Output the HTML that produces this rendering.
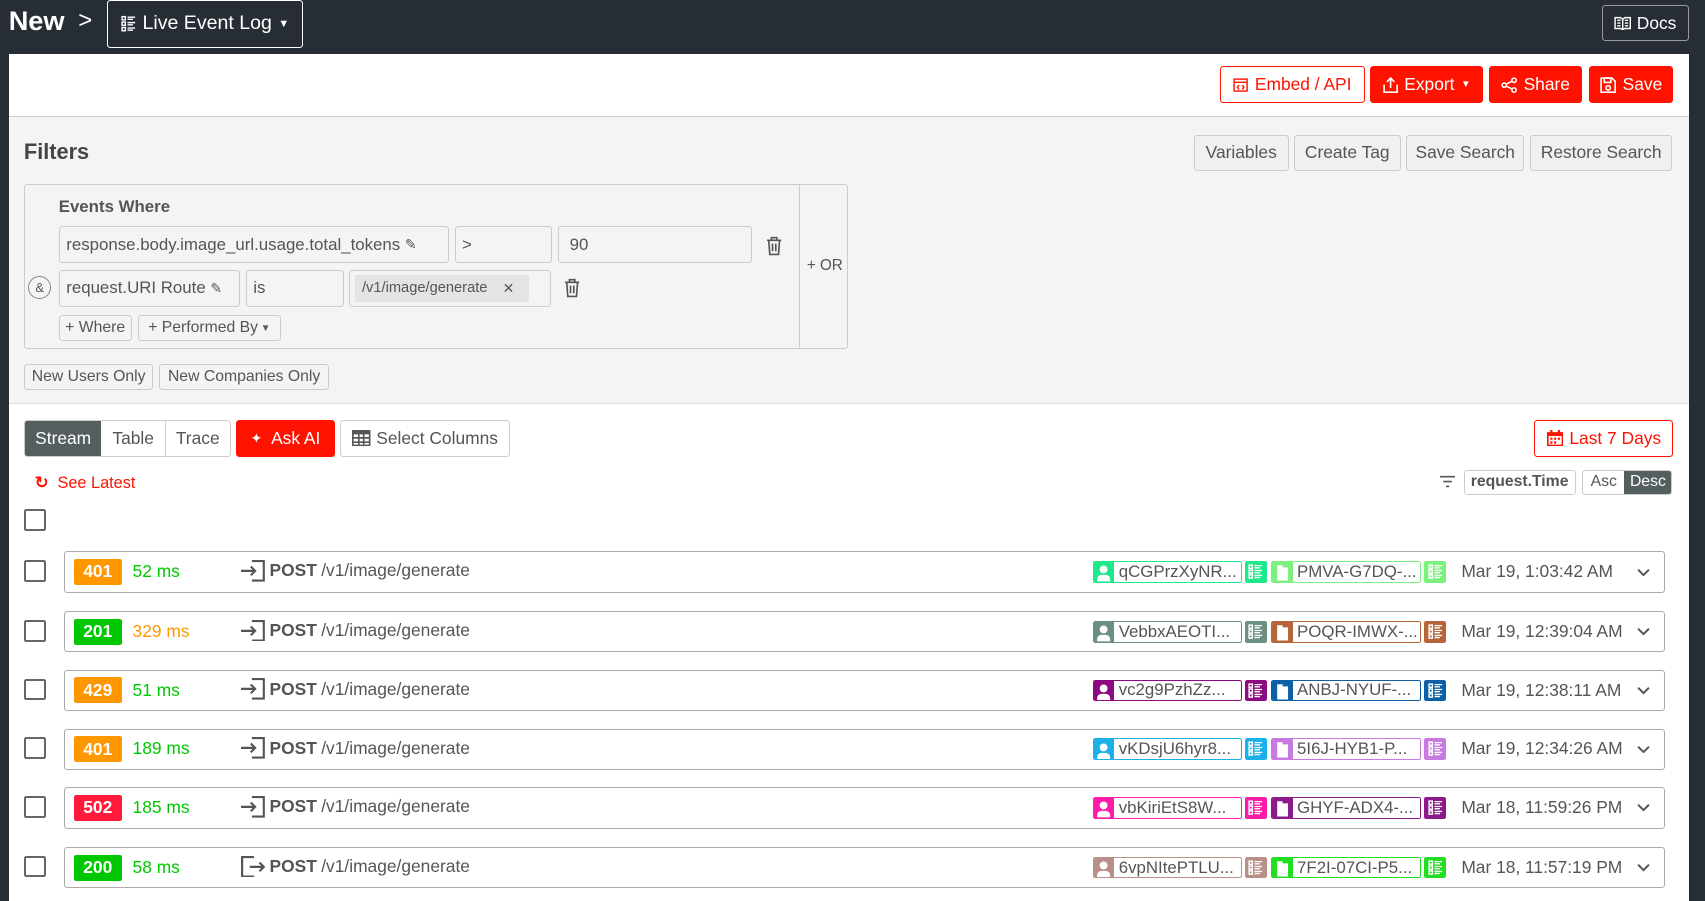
<!DOCTYPE html>
<html><head><meta charset="utf-8"><style>
html,body{margin:0;padding:0;background:#262d34;overflow:hidden}
body{width:1568px;height:829px;zoom:1.08737;position:relative;font-family:"Liberation Sans",Arial,sans-serif;color:#555;font-size:15.5px}
.a{position:absolute}
.btn{position:absolute;box-sizing:border-box;border:1px solid #ccc;border-radius:3px;display:flex;align-items:center;justify-content:center;white-space:nowrap}
.red{background:#ff1200;color:#fff;border-color:#ff1200}
.ored{color:#ff1200;border-color:#ff1200;background:#fff}
.gb{background:#f0f0f0;color:#555}
.inp{position:absolute;box-sizing:border-box;border:1px solid #ccc;border-radius:3px;background:#f4f4f4;display:flex;align-items:center;padding-left:6px;height:34px}
.row{position:absolute;left:59px;width:1472px;height:38px;box-sizing:border-box;border:1px solid #aaa;border-radius:3px;background:#fff}
.cb{position:absolute;left:22px;width:20px;height:20px;box-sizing:border-box;border:2px solid #666;border-radius:2px}
.st{position:absolute;left:8px;top:6px;width:44px;height:24px;color:#fff;font-weight:bold;font-size:16px;display:flex;align-items:center;justify-content:center;border-radius:2px}
.ms{position:absolute;left:62px;top:8px;font-size:16px}
.ep{position:absolute;left:162px;top:7px;display:flex;align-items:center;gap:4px;font-size:16px}
.chip{position:absolute;top:8px;height:20px;box-sizing:border-box;border:1px solid;border-radius:2px;display:flex;align-items:center;overflow:hidden;background:#fff;font-size:15.5px}
.chip .ic{width:19px;height:100%;display:flex;align-items:flex-end;justify-content:center;flex:none}
.chip span{padding-left:4px;color:#555}
.li{position:absolute;top:8px;width:20px;height:20px;border-radius:2px;display:flex;align-items:center;justify-content:center}
.dt{position:absolute;left:1284px;top:8px;font-size:16px;color:#555}
.chev{position:absolute;left:1446px;top:14px}
</style></head><body>
<svg width="0" height="0" style="position:absolute">
<symbol id="u" viewBox="0 0 14 16"><circle cx="7" cy="5" r="3.6" fill="#fff"/><path d="M1 17v-3a4 4 0 014-4h4a4 4 0 014 4v3z" fill="#fff"/></symbol>
<symbol id="b" viewBox="0 0 14 18"><path d="M2 3h5v2h5v12H2z" fill="#fff"/></symbol>
<symbol id="l" viewBox="0 0 14 14"><g fill="none" stroke="#fff" stroke-width="1.3"><rect x="1" y="1" width="3" height="3"/><rect x="1" y="5.5" width="3" height="3"/><rect x="1" y="10" width="3" height="3"/></g><path d="M6 1.5h7M6 3.5h5M6 6h7M6 8h5M6 10.5h7M6 12.5h5" stroke="#fff" stroke-width="1.2"/></symbol>
<symbol id="c" viewBox="0 0 12 8"><path d="M1 1.5l5 5 5-5" fill="none" stroke="#555" stroke-width="1.8"/></symbol>
<symbol id="in" viewBox="0 0 22 20"><path d="M0 10h13M9 6l4 4-4 4M10 1h11v18H10" fill="none" stroke="#555" stroke-width="2"/></symbol>
</svg>
<div class="a" style="left:8px;top:5px;color:#fff;font-weight:bold;font-size:25px">New</div>
<div class="a" style="left:72px;top:6px;color:#fff;font-size:22px">&gt;</div>
<div class="btn" style="left:98px;top:0;width:181px;height:44px;border-color:#fff;color:#fff;font-size:18px;gap:6px">
<svg width="14" height="16" viewBox="0 0 14 16" fill="none" stroke="#fff" stroke-width="1.3"><rect x="1" y="1.5" width="3" height="3"/><rect x="1" y="6.5" width="3" height="3"/><rect x="1" y="11.5" width="3" height="3"/><path d="M6 2h7M6 4h5M6 7h7M6 9h5M6 12h7M6 14h5"/></svg>Live Event Log <span style="font-size:10px">▼</span></div>
<div class="btn" style="left:1473px;top:5px;width:80px;height:33px;border-color:#999;color:#fff;font-size:16px;gap:5px"><svg width="16" height="13" viewBox="0 0 16 13" fill="none" stroke="#fff" stroke-width="1.3"><path d="M1 1.5h5l2 1.5 2-1.5h5v10h-5l-2 1-2-1H1zM8 3v9M3 4h3M3 6.5h3M3 9h3M10 4h3M10 6.5h3M10 9h3"/></svg>Docs</div>

<div class="a" style="left:8px;top:50px;width:1545px;height:779px;background:#fff"></div>
<div class="a" style="left:8px;top:107px;width:1545px;height:263px;background:#f4f4f4;border-top:1px solid #ccc;border-bottom:1px solid #ddd"></div>

<div class="btn ored" style="left:1122px;top:61px;width:133px;height:34px;gap:6px;font-size:16px"><svg width="14" height="13" viewBox="0 0 14 13" fill="none" stroke="#ff1200" stroke-width="1.3"><rect x="1" y="1" width="12" height="11"/><path d="M1 4h12M5.5 6.5l-1.5 2 1.5 2M8.5 6.5l1.5 2-1.5 2"/></svg>Embed / API</div>
<div class="btn red" style="left:1260px;top:61px;width:104px;height:34px;gap:6px;font-size:16px"><svg width="14" height="15" viewBox="0 0 14 15" fill="none" stroke="#fff" stroke-width="1.5"><path d="M7 10V1M3.5 4.5L7 1l3.5 3.5M1 7v7h12V7"/></svg>Export <span style="font-size:9px">▼</span></div>
<div class="btn red" style="left:1369px;top:61px;width:86px;height:34px;gap:6px;font-size:16px"><svg width="15" height="15" viewBox="0 0 15 15" fill="none" stroke="#fff" stroke-width="1.4"><circle cx="12" cy="3" r="2"/><circle cx="3" cy="7.5" r="2"/><circle cx="12" cy="12" r="2"/><path d="M5 6.5l5-2.5M5 8.5l5 2.5"/></svg>Share</div>
<div class="btn red" style="left:1461px;top:61px;width:78px;height:34px;gap:6px;font-size:16px"><svg width="15" height="15" viewBox="0 0 15 15" fill="none" stroke="#fff" stroke-width="1.5"><path d="M1 1h10l3 3v10H1z"/><rect x="4" y="1" width="6" height="4"/><circle cx="7.5" cy="10" r="2"/></svg>Save</div>

<div class="a" style="left:22px;top:128px;font-weight:bold;font-size:20px;color:#444">Filters</div>
<div class="btn gb" style="left:1098px;top:124px;width:87px;height:33px;font-size:16px">Variables</div>
<div class="btn gb" style="left:1190px;top:124px;width:98px;height:33px;font-size:16px">Create Tag</div>
<div class="btn gb" style="left:1293px;top:124px;width:109px;height:33px;font-size:16px">Save Search</div>
<div class="btn gb" style="left:1407px;top:124px;width:131px;height:33px;font-size:16px">Restore Search</div>

<div class="a" style="left:22px;top:169px;width:758px;height:152px;box-sizing:border-box;border:1px solid #ccc;border-radius:3px"></div>
<div class="a" style="left:735px;top:169px;width:1px;height:152px;background:#ccc"></div>
<div class="a" style="left:742px;top:236px;font-size:14px">+ OR</div>
<div class="a" style="left:54px;top:181px;font-weight:bold;font-size:15.5px">Events Where</div>
<div class="inp" style="left:54px;top:208px;width:359px">response.body.image_url.usage.total_tokens&nbsp;<span style="font-size:13px">✎</span></div>
<div class="inp" style="left:418px;top:208px;width:90px">&gt;</div>
<div class="inp" style="left:513px;top:208px;width:179px;padding-left:10px">90</div>
<svg class="a" style="left:704px;top:217px" width="15" height="18" viewBox="0 0 15 18" fill="none" stroke="#555" stroke-width="1.5"><path d="M1 4h13M5 4V1.5h5V4M2.5 4l1 13h8l1-13M6 7v7M9 7v7"/></svg>
<div class="a" style="left:26px;top:254px;width:21px;height:21px;border:1px solid #888;border-radius:50%;box-sizing:border-box;font-size:12px;display:flex;align-items:center;justify-content:center">&amp;</div>
<div class="inp" style="left:54px;top:248px;width:167px">request.URI Route&nbsp;<span style="font-size:13px">✎</span></div>
<div class="inp" style="left:226px;top:248px;width:90px">is</div>
<div class="inp" style="left:321px;top:248px;width:186px;padding-left:5px"><div style="background:#e4e4e4;height:25px;width:160px;display:flex;align-items:center;padding-left:6px;box-sizing:border-box;font-size:13.5px">/v1/image/generate<span style="margin-left:14px;font-size:13px">✕</span></div></div>
<svg class="a" style="left:519px;top:256px" width="15" height="18" viewBox="0 0 15 18" fill="none" stroke="#555" stroke-width="1.5"><path d="M1 4h13M5 4V1.5h5V4M2.5 4l1 13h8l1-13M6 7v7M9 7v7"/></svg>
<div class="btn" style="left:54px;top:290px;width:67px;height:24px;font-size:14.5px">+ Where</div>
<div class="btn" style="left:127px;top:290px;width:131px;height:24px;font-size:14.5px">+ Performed By <span style="font-size:9px">&nbsp;▼</span></div>
<div class="btn" style="left:22px;top:335px;width:119px;height:24px;font-size:14.5px">New Users Only</div>
<div class="btn" style="left:146px;top:335px;width:157px;height:24px;font-size:14.5px">New Companies Only</div>

<div class="btn" style="left:22px;top:386px;width:190px;height:34px;overflow:hidden;justify-content:flex-start;font-size:16px">
<div style="width:71px;height:100%;background:#555e5e;color:#fff;display:flex;align-items:center;justify-content:center">Stream</div>
<div style="width:59px;height:100%;border-right:1px solid #ccc;display:flex;align-items:center;justify-content:center">Table</div>
<div style="width:59px;display:flex;align-items:center;justify-content:center">Trace</div></div>
<div class="btn red" style="left:217px;top:386px;width:91px;height:34px;font-size:16px;gap:8px"><span style="font-size:13px">✦</span>Ask AI</div>
<div class="btn" style="left:313px;top:386px;width:156px;height:34px;font-size:16px;gap:5px"><svg width="17" height="15" viewBox="0 0 17 15" fill="#555"><path d="M0 0h17v15H0zM1.5 4v2.5h4V4zm5.5 0v2.5h3V4zm4.5 0v2.5h4V4zM1.5 8v2.5h4V8zm5.5 0v2.5h3V8zm4.5 0v2.5h4V8zM1.5 12v1.5h4V12zm5.5 0v1.5h3V12zm4.5 0v1.5h4V12z"/></svg>Select Columns</div>
<div class="btn ored" style="left:1411px;top:386px;width:128px;height:34px;font-size:16px;gap:6px"><svg width="15" height="15" viewBox="0 0 15 15" fill="#ff1200"><path d="M0 2h15v13H0zM1.5 5.5v8h12v-8zM3 0h2v3H3zM10 0h2v3h-2zM3 7h2v2H3zm3.5 0h2v2h-2zM10 7h2v2h-2zM3 10.5h2v2H3zm3.5 0h2v2h-2z"/></svg>Last 7 Days</div>
<div class="a" style="left:32px;top:435px;color:#ff1200;font-size:15px"><span style="font-weight:bold">↻</span>&nbsp; See Latest</div>
<svg class="a" style="left:1324px;top:437px" width="14" height="12" viewBox="0 0 14 12" stroke="#555" stroke-width="1.5"><path d="M0 1.5h14M3 6h8M5.5 10.5h3"/></svg>
<div class="btn" style="left:1346px;top:432px;width:103px;height:23px;font-weight:bold;font-size:14.5px">request.Time</div>
<div class="btn" style="left:1455px;top:432px;width:83px;height:23px;overflow:hidden;justify-content:flex-start;font-size:14.5px"><div style="width:38px;text-align:center">Asc</div><div style="flex:1;height:100%;background:#555e5e;color:#fff;display:flex;align-items:center;justify-content:center">Desc</div></div>
<div class="cb" style="top:468px"></div>

<!-- rows -->
<div class="cb" style="top:515px"></div>
<div class="row" style="top:507px"><div class="st" style="background:#ff9800">401</div><div class="ms" style="color:#00c800">52 ms</div>
<div class="ep"><svg width="22" height="20"><use href="#in"/></svg><b>POST</b> /v1/image/generate</div>
<div class="chip" style="left:945px;width:137px;border-color:#1de98b"><div class="ic" style="background:#1de98b"><svg width="14" height="16"><use href="#u"/></svg></div><span>qCGPrzXyNR...</span></div>
<div class="li" style="left:1085px;background:#1de98b"><svg width="14" height="14"><use href="#l"/></svg></div>
<div class="chip" style="left:1109px;width:138px;border-color:#7cf07c"><div class="ic" style="background:#7cf07c"><svg width="14" height="18"><use href="#b"/></svg></div><span>PMVA-G7DQ-...</span></div>
<div class="li" style="left:1250px;background:#7cf07c"><svg width="14" height="14"><use href="#l"/></svg></div>
<div class="dt">Mar 19, 1:03:42 AM</div><svg class="chev" width="12" height="8"><use href="#c"/></svg></div>

<div class="cb" style="top:570px"></div>
<div class="row" style="top:562px"><div class="st" style="background:#00c800">201</div><div class="ms" style="color:#ff9800">329 ms</div>
<div class="ep"><svg width="22" height="20"><use href="#in"/></svg><b>POST</b> /v1/image/generate</div>
<div class="chip" style="left:945px;width:137px;border-color:#6b9080"><div class="ic" style="background:#6b9080"><svg width="14" height="16"><use href="#u"/></svg></div><span>VebbxAEOTI...</span></div>
<div class="li" style="left:1085px;background:#6b9080"><svg width="14" height="14"><use href="#l"/></svg></div>
<div class="chip" style="left:1109px;width:138px;border-color:#b5653a"><div class="ic" style="background:#b5653a"><svg width="14" height="18"><use href="#b"/></svg></div><span>POQR-IMWX-...</span></div>
<div class="li" style="left:1250px;background:#b5653a"><svg width="14" height="14"><use href="#l"/></svg></div>
<div class="dt">Mar 19, 12:39:04 AM</div><svg class="chev" width="12" height="8"><use href="#c"/></svg></div>

<div class="cb" style="top:624px"></div>
<div class="row" style="top:616px"><div class="st" style="background:#ff9800">429</div><div class="ms" style="color:#00c800">51 ms</div>
<div class="ep"><svg width="22" height="20"><use href="#in"/></svg><b>POST</b> /v1/image/generate</div>
<div class="chip" style="left:945px;width:137px;border-color:#8b0a7f"><div class="ic" style="background:#8b0a7f"><svg width="14" height="16"><use href="#u"/></svg></div><span>vc2g9PzhZz...</span></div>
<div class="li" style="left:1085px;background:#8b0a7f"><svg width="14" height="14"><use href="#l"/></svg></div>
<div class="chip" style="left:1109px;width:138px;border-color:#0d5fa6"><div class="ic" style="background:#0d5fa6"><svg width="14" height="18"><use href="#b"/></svg></div><span>ANBJ-NYUF-...</span></div>
<div class="li" style="left:1250px;background:#0d5fa6"><svg width="14" height="14"><use href="#l"/></svg></div>
<div class="dt">Mar 19, 12:38:11 AM</div><svg class="chev" width="12" height="8"><use href="#c"/></svg></div>

<div class="cb" style="top:678px"></div>
<div class="row" style="top:670px"><div class="st" style="background:#ff9800">401</div><div class="ms" style="color:#00c800">189 ms</div>
<div class="ep"><svg width="22" height="20"><use href="#in"/></svg><b>POST</b> /v1/image/generate</div>
<div class="chip" style="left:945px;width:137px;border-color:#1ab0e8"><div class="ic" style="background:#1ab0e8"><svg width="14" height="16"><use href="#u"/></svg></div><span>vKDsjU6hyr8...</span></div>
<div class="li" style="left:1085px;background:#1ab0e8"><svg width="14" height="14"><use href="#l"/></svg></div>
<div class="chip" style="left:1109px;width:138px;border-color:#c77ae0"><div class="ic" style="background:#c77ae0"><svg width="14" height="18"><use href="#b"/></svg></div><span>5I6J-HYB1-P...</span></div>
<div class="li" style="left:1250px;background:#c77ae0"><svg width="14" height="14"><use href="#l"/></svg></div>
<div class="dt">Mar 19, 12:34:26 AM</div><svg class="chev" width="12" height="8"><use href="#c"/></svg></div>

<div class="cb" style="top:732px"></div>
<div class="row" style="top:724px"><div class="st" style="background:#ff1a3c">502</div><div class="ms" style="color:#00c800">185 ms</div>
<div class="ep"><svg width="22" height="20"><use href="#in"/></svg><b>POST</b> /v1/image/generate</div>
<div class="chip" style="left:945px;width:137px;border-color:#ff1aa8"><div class="ic" style="background:#ff1aa8"><svg width="14" height="16"><use href="#u"/></svg></div><span>vbKiriEtS8W...</span></div>
<div class="li" style="left:1085px;background:#ff1aa8"><svg width="14" height="14"><use href="#l"/></svg></div>
<div class="chip" style="left:1109px;width:138px;border-color:#8b1a8b"><div class="ic" style="background:#8b1a8b"><svg width="14" height="18"><use href="#b"/></svg></div><span>GHYF-ADX4-...</span></div>
<div class="li" style="left:1250px;background:#8b1a8b"><svg width="14" height="14"><use href="#l"/></svg></div>
<div class="dt">Mar 18, 11:59:26 PM</div><svg class="chev" width="12" height="8"><use href="#c"/></svg></div>

<div class="cb" style="top:787px"></div>
<div class="row" style="top:779px"><div class="st" style="background:#00c800">200</div><div class="ms" style="color:#00c800">58 ms</div>
<div class="ep"><svg width="22" height="20" viewBox="0 0 22 20" fill="none" stroke="#555" stroke-width="2"><path d="M8 10h13M17 6l4 4-4 4M12 1H1v18h11"/></svg><b>POST</b> /v1/image/generate</div>
<div class="chip" style="left:945px;width:137px;border-color:#b89088"><div class="ic" style="background:#b89088"><svg width="14" height="16"><use href="#u"/></svg></div><span>6vpNItePTLU...</span></div>
<div class="li" style="left:1085px;background:#b89088"><svg width="14" height="14"><use href="#l"/></svg></div>
<div class="chip" style="left:1109px;width:138px;border-color:#22dd22"><div class="ic" style="background:#22dd22"><svg width="14" height="18"><use href="#b"/></svg></div><span>7F2I-07CI-P5...</span></div>
<div class="li" style="left:1250px;background:#22dd22"><svg width="14" height="14"><use href="#l"/></svg></div>
<div class="dt">Mar 18, 11:57:19 PM</div><svg class="chev" width="12" height="8"><use href="#c"/></svg></div>
</body></html>
